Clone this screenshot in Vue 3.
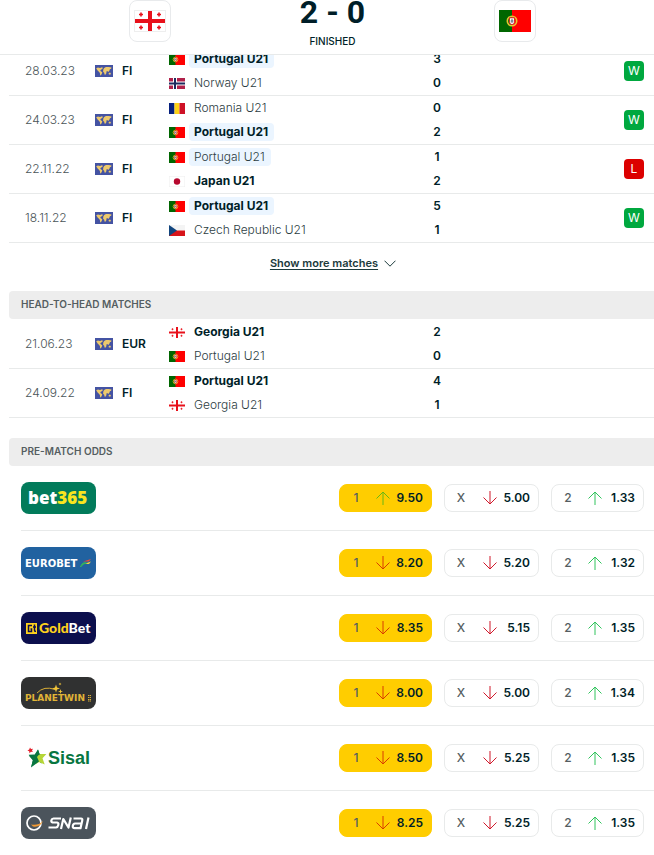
<script setup>
import { h } from 'vue'

const recent = [
  { date: '28.03.23', comp: 'FI', home: ['pt', 'Portugal U21', 3, true], away: ['no', 'Norway U21', 0, false], focus: 0, result: 'W' },
  { date: '24.03.23', comp: 'FI', home: ['ro', 'Romania U21', 0, false], away: ['pt', 'Portugal U21', 2, true], focus: 1, result: 'W' },
  { date: '22.11.22', comp: 'FI', home: ['pt', 'Portugal U21', 1, false], away: ['jp', 'Japan U21', 2, true], focus: 0, result: 'L' },
  { date: '18.11.22', comp: 'FI', home: ['pt', 'Portugal U21', 5, true], away: ['cz', 'Czech Republic U21', 1, false], focus: 0, result: 'W' }
]
const headToHead = [
  { date: '21.06.23', comp: 'EUR', home: ['ge', 'Georgia U21', 2, true], away: ['pt', 'Portugal U21', 0, false] },
  { date: '24.09.22', comp: 'FI', home: ['pt', 'Portugal U21', 4, true], away: ['ge', 'Georgia U21', 1, false] }
]
const sections = [
  { id: 'recent', rows: recent },
  { id: 'h2h', title: 'HEAD-TO-HEAD MATCHES', rows: headToHead }
]
const odds = [
  { id: 'bet365', prices: [['1', 'up', '9.50'], ['X', 'down', '5.00'], ['2', 'up', '1.33']] },
  { id: 'eurobet', prices: [['1', 'down', '8.20'], ['X', 'down', '5.20'], ['2', 'up', '1.32']] },
  { id: 'goldbet', prices: [['1', 'down', '8.35'], ['X', 'down', '5.15'], ['2', 'up', '1.35']] },
  { id: 'planetwin', prices: [['1', 'down', '8.00'], ['X', 'down', '5.00'], ['2', 'up', '1.34']] },
  { id: 'sisal', prices: [['1', 'down', '8.50'], ['X', 'down', '5.25'], ['2', 'up', '1.35']] },
  { id: 'snai', prices: [['1', 'down', '8.25'], ['X', 'down', '5.25'], ['2', 'up', '1.35']] }
]

const r = (fill, x, y, width, height) => h('rect', { fill, x, y, width, height })
const flagArt = {
  pt: () => [
    r('#ff0000', 0, 0, 32, 22), r('#006600', 0, 0, 13, 22),
    h('circle', { cx: 13, cy: 11, r: 4.7, fill: 'none', stroke: '#e8c52f', 'stroke-width': 1.6 }),
    h('path', { d: 'M10.5 7.8h5v4a2.5 2.8 0 0 1-5 0z', fill: '#fff', stroke: '#d22', 'stroke-width': 1 }),
    h('path', { d: 'M13 9v4M11.5 11h3', stroke: '#345', 'stroke-width': 0.8 })
  ],
  ge: () => [
    r('#fff', 0, 0, 32, 22), r('#e8101a', 14, 0, 4, 22), r('#e8101a', 0, 9, 32, 4),
    h('path', { d: 'M7 2.500v4M5 4.500h4M25 2.500v4M23 4.500h4M7 15.500v4M5 17.500h4M25 15.500v4M23 17.500h4', stroke: '#e8101a', 'stroke-width': 1.6 })
  ],
  no: () => [
    r('#b0214a', 0, 0, 32, 22), r('#fff', 8, 0, 8, 22), r('#fff', 0, 7, 32, 8),
    r('#1c2a5e', 10, 0, 4, 22), r('#1c2a5e', 0, 9, 32, 4)
  ],
  ro: () => [r('#06207e', 0, 0, 11, 22), r('#fcd116', 11, 0, 10, 22), r('#ce1126', 21, 0, 11, 22)],
  jp: () => [
    h('rect', { x: 0.5, y: 0.5, width: 31, height: 21, fill: '#fff', stroke: '#eee' }),
    h('circle', { cx: 16, cy: 11, r: 6.4, fill: '#b7082f' })
  ],
  cz: () => [r('#f4f4f4', 0, 0, 32, 11), r('#d7141a', 0, 11, 32, 11), h('path', { d: 'M0 0l16 11L0 22z', fill: '#11457e' })]
}
const Flag = (props) => h('svg', { viewBox: '0 0 32 22', 'aria-hidden': 'true' }, flagArt[props.code]())
Flag.props = ['code']
</script>

<template>
  <div class="page">
    <header class="top">
      <div class="crest"><Flag code="ge" class="flag-lg outlined" /></div>
      <div class="status">
        <div class="score"><span>2</span><span>-</span><span>0</span></div>
        <div class="state">FINISHED</div>
      </div>
      <div class="crest"><Flag code="pt" class="flag-lg" /></div>
    </header>

    <main>
      <section v-for="s in sections" :key="s.id" :class="s.id">
        <h2 v-if="s.title" class="bar">{{ s.title }}</h2>
        <table class="matches">
          <tbody>
            <tr v-for="m in s.rows" :key="m.date">
              <td class="date">{{ m.date }}</td>
              <td class="comp">
                <div class="comp-in">
                  <svg class="world" viewBox="0 0 18 12" aria-hidden="true">
                    <rect width="18" height="12" fill="#4453a3" />
                    <path fill="#edc96c" d="M1.200 3.200L3 2.600l2 .3 2-.6 1 .6-1.200 1.300-1 .6-.5 1 .9.6 1.100.9-.5 1.400-1 1.700-.7-.3-.2-2-1-1.400-1.300-1.300zM8.300 4.600l.9-1.600 1.700-.9 2.800-.1 2.800.5-.4 1.200-1.200.5-.5 1.500-1.200 1.200-1-.9-.9.8.2 1.100-1.100 1.900-.9-.3-.3-1.800-1.100-.9zM13.700 7.900l1.400-.3.9 1.200-.9.9-1.400-.5z" />
                  </svg>
                  <span>{{ m.comp }}</span>
                </div>
              </td>
              <td class="teams">
                <div v-for="(t, i) in [m.home, m.away]" :key="i" class="team">
                  <Flag :code="t[0]" class="flag-sm" />
                  <span :class="['name', { win: t[3], focus: m.focus === i }]">{{ t[1] }}</span>
                </div>
              </td>
              <td class="goals">
                <div>{{ m.home[2] }}</div>
                <div>{{ m.away[2] }}</div>
              </td>
              <td class="result"><span v-if="m.result" :class="['badge', m.result]">{{ m.result }}</span></td>
            </tr>
          </tbody>
        </table>
        <div v-if="s.id === 'recent'" class="more">
          <button type="button">
            <span>Show more matches</span>
            <svg width="12" height="7" viewBox="0 0 12 7" aria-hidden="true"><path d="M.5.7L6 6.200 11.500.7" fill="none" stroke="#1c3a3c" /></svg>
          </button>
        </div>
      </section>

      <section class="odds">
        <h2 class="bar">PRE-MATCH ODDS</h2>
        <div v-for="o in odds" :key="o.id" class="odds-row">
          <a href="#" :class="['logo', o.id]">
            <svg v-if="o.id === 'bet365'" viewBox="0 0 75 32">
              <text x="7" y="22" class="t-bet">bet<tspan fill="#f9e51e">365</tspan></text>
            </svg>
            <svg v-else-if="o.id === 'eurobet'" viewBox="0 0 75 32">
              <text x="4" y="20" class="t-euro">EUROBET</text>
              <path d="M62 14.500l8-2.500-2 2.500z" fill="#e8483e" />
              <path d="M63 17l7-2.500-2 2.500z" fill="#f4d23c" />
              <path d="M59.500 20c1.500-4 3-4.800 6-4-2.500.6-4 1.500-6 4z" fill="#35b35d" stroke="#35b35d" />
            </svg>
            <svg v-else-if="o.id === 'goldbet'" viewBox="0 0 75 32">
              <rect x="5" y="11" width="11" height="11" fill="#ffd21c" />
              <path d="M11 13.500H7.500v6H10.500V17H9.500M13.500 12.500v5.500q0 1.500 1.500 1.300M12 15h3" fill="none" stroke="#0c0f4d" stroke-width="1.500" />
              <text x="18" y="21" class="t-gold">Gold<tspan fill="#fff">Bet</tspan></text>
            </svg>
            <svg v-else-if="o.id === 'planetwin'" viewBox="0 0 75 32">
              <path d="M16 16Q23 8.500 34 12.500" fill="none" stroke="#d8ad36" />
              <path d="M35 7.500l1 3 3 1-3 1-1 3-1-3-3-1 3-1zM39.500 12l.6 1.900 1.900.6-1.900.6-.6 1.900-.6-1.900-1.900-.6 1.900-.6zM39 5.500l.4 1.100 1.100.4-1.100.4-.4 1.100-.4-1.100-1.100-.4 1.100-.4z" fill="#f4c638" />
              <text x="4" y="24" class="t-planet">PLANETWIN</text>
              <path d="M67 18.500h3M67 20.500h3M67 22.500h3M67 24h3" stroke="#d8ad36" stroke-dasharray="1.300 .4" />
            </svg>
            <svg v-else-if="o.id === 'sisal'" viewBox="0 0 75 32">
              <path d="M17 7.500l1.700 4.700 5.100.5-3.900 3.200 1 5.600-4-2.600-6.700 6 1.600-6.700-4.100-4.600 6.300-.5z" fill="#087641" />
              <path d="M16 13.500l4-1.500 5.400 0-3.900 4.200 2.200 6.300-5.500-2.500-3.700 2.200 1-4.200z" fill="#b6d637" />
              <path d="M17 7.500l1.500 4.500-2.500 3 2 4.500-8 6 2-7.500-4.300-5.200 6-.3z" fill="#087641" />
              <path d="M9 5.500l1 1.500 2-.3-1 1.700.9 1.700-2-.3-1.400 1.400-.3-1.900-1.800-.9 1.800-.8z" fill="#e3212c" />
              <text x="27" y="22" class="t-sisal">Sisal</text>
            </svg>
            <svg v-else viewBox="0 0 75 32">
              <circle cx="13" cy="16" r="7" fill="none" stroke="#fff" stroke-width="1.700" />
              <path d="M10 17.500q7 1.500 12-3.500-2.500 6.500-10 5.500" fill="#f19a35" />
              <g fill="none" stroke="#fff" stroke-width="2.200" stroke-linejoin="round">
                <path d="M40 11.500h-7.500q-1.700 0-2.100 1.700t1.200 2.300h4.500q1.700.3 1.200 2.500t-2.300 2.500H27.500" />
                <path d="M40 22l2.300-10 5.200 8.500 2.300-10" />
                <path d="M52.500 11.500H60q1.700 0 1.200 2.200l-1.700 7.500h-6q-2 0-1.700-2.300t2.200-2.400h6" />
                <path d="M67.500 10.500L65 22" />
              </g>
            </svg>
          </a>
          <div class="prices">
            <button v-for="(p, i) in o.prices" :key="i" type="button" :class="['price', { best: i === 0 }]">
              <span class="pick">{{ p[0] }}</span>
              <svg :class="['arrow', p[1]]" width="14" height="14" viewBox="0 0 14 14" aria-hidden="true">
                <path v-if="p[1] === 'up'" d="M7 14V1M.5 7.500L7 1l6.500 6.500" />
                <path v-else d="M7 0v13M.5 6.500L7 13l6.500-6.500" />
              </svg>
              <span class="val">{{ p[2] }}</span>
            </button>
          </div>
        </div>
      </section>
    </main>
  </div>
</template>

<style>
body {
  margin: 0;
  background: #fff;
}
</style>

<style scoped>
.page {
  font-family: Inter, "Liberation Sans", sans-serif;
  font-size: 12px;
  color: #001e28;
}
.top {
  position: sticky;
  top: 0;
  z-index: 1;
  display: grid;
  grid-template-columns: repeat(3, 1fr);
  justify-items: center;
  align-items: start;
  height: 54px;
  padding: 0 48px 0 59px;
  background: #fff;
  border-bottom: 1px solid #e8eaea;
}
.crest {
  display: flex;
  align-items: center;
  justify-content: center;
  box-sizing: border-box;
  width: 42px;
  height: 42px;
  border: 1px solid #e8eaec;
  border-radius: 8px;
}
.flag-lg {
  width: 32px;
  height: 22px;
}
.outlined {
  outline: 1px solid #eee;
  outline-offset: -1px;
}
.status {
  text-align: center;
}
.score {
  display: flex;
  justify-content: center;
  gap: 8px;
  height: 24px;
  font: 700 32px/24px Roboto, sans-serif;
}
.state {
  margin-top: 11px;
  font-size: 10px;
  font-weight: 500;
  line-height: 12px;
}
main {
  margin: -8px 0 0 9px;
}
.bar {
  margin: 0;
  padding: 0 12px 2px;
  border-radius: 4px 0 0 4px;
  background: #ededed;
  color: #555e61;
  font-size: 10px;
  font-weight: 600;
  line-height: 26px;
}
.h2h .bar {
  margin-bottom: 1px;
}
.matches {
  width: 100%;
  table-layout: fixed;
  border-collapse: separate;
  border-spacing: 0;
}
td {
  height: 48px;
  padding: 0;
  border-bottom: 1px solid #e8eaea;
  line-height: 14px;
}
.date {
  width: 86px;
  padding-left: 16px;
  box-sizing: border-box;
  color: #4a5457;
  font-weight: 300;
}
.comp {
  width: 74px;
}
.comp-in {
  display: flex;
  align-items: center;
  gap: 9px;
  font-weight: 600;
}
.world {
  width: 18px;
  height: 12px;
}
.teams {
  width: 40%;
}
.team {
  display: flex;
  align-items: center;
  gap: 4px;
  height: 24px;
}
.flag-sm {
  width: 16px;
  height: 11px;
}
.name {
  padding: 0 6px 0 5px;
  border-radius: 4px;
  color: #2c3c42;
  font-weight: 300;
  line-height: 18px;
}
.name.win {
  color: #001e28;
  font-weight: 700;
}
.name.focus {
  background: #ebf5ff;
}
.goals {
  width: 20px;
  text-align: center;
  font-weight: 600;
  line-height: 24px;
}
.result {
  padding-right: 10px;
}
.badge {
  display: block;
  width: 20px;
  margin-left: auto;
  border-radius: 4px;
  background: #00a83f;
  color: #fff;
  text-align: center;
  line-height: 20px;
}
.badge.L {
  background: #dc0000;
}
.more {
  display: flex;
  justify-content: center;
  height: 40px;
  margin: 0 0 8px 3px;
}
button {
  font: inherit;
  color: inherit;
  cursor: pointer;
}
.more button {
  display: flex;
  align-items: center;
  gap: 6px;
  padding: 0;
  border: 0;
  background: none;
  color: #1c3a3c;
  font-size: 11px;
  font-weight: 600;
}
.more span {
  text-decoration: underline;
  text-underline-offset: 2px;
}
.odds {
  margin-top: 20px;
}
.odds-row {
  display: flex;
  align-items: center;
  justify-content: space-between;
  height: 64px;
  margin-left: 12px;
  padding-right: 10px;
  border-bottom: 1px solid #e8eaea;
}
.odds-row:last-child {
  border-bottom: 0;
}
.logo {
  width: 75px;
  height: 32px;
  border-radius: 8px;
}
.logo svg {
  display: block;
}
.bet365 { background: #027b5b; }
.eurobet { background: #2162a0; }
.goldbet { background: #0c0f4d; }
.planetwin { background: #303131; }
.snai { background: #4b545c; }
.t-bet {
  font: 800 17px "Open Sans", sans-serif;
  fill: #fff;
}
.t-euro {
  font: 700 10px "DejaVu Sans", sans-serif;
  fill: #fff;
}
.t-gold {
  font: 900 14px Lato, sans-serif;
  fill: #ffd21c;
}
.t-planet {
  font: 700 9px "DejaVu Sans", sans-serif;
  fill: #e0b437;
}
.t-sisal {
  font: 700 18px "Liberation Sans", sans-serif;
  fill: #087641;
}
.prices {
  display: grid;
  grid-template-columns: 93px 95px 93px;
  gap: 12px;
}
.price {
  display: flex;
  align-items: center;
  box-sizing: border-box;
  height: 28px;
  padding: 0 8px;
  border: 1px solid #e8eaea;
  border-radius: 8px;
  background: #fff;
  font-weight: 600;
  line-height: 14px;
}
.price.best {
  border-color: #ffcd00;
  background: #ffcd00;
}
.pick {
  width: 16px;
  margin-right: auto;
  color: #555e61;
  font-weight: 500;
  text-align: center;
}
.arrow {
  margin-right: 5px;
  fill: none;
}
.val {
  width: 28px;
  text-align: right;
}
.up { stroke: #30c45c; }
.down { stroke: #d0182a; }
.best .up { stroke: #68b814; }
.best .down { stroke: #d83c00; }
</style>
